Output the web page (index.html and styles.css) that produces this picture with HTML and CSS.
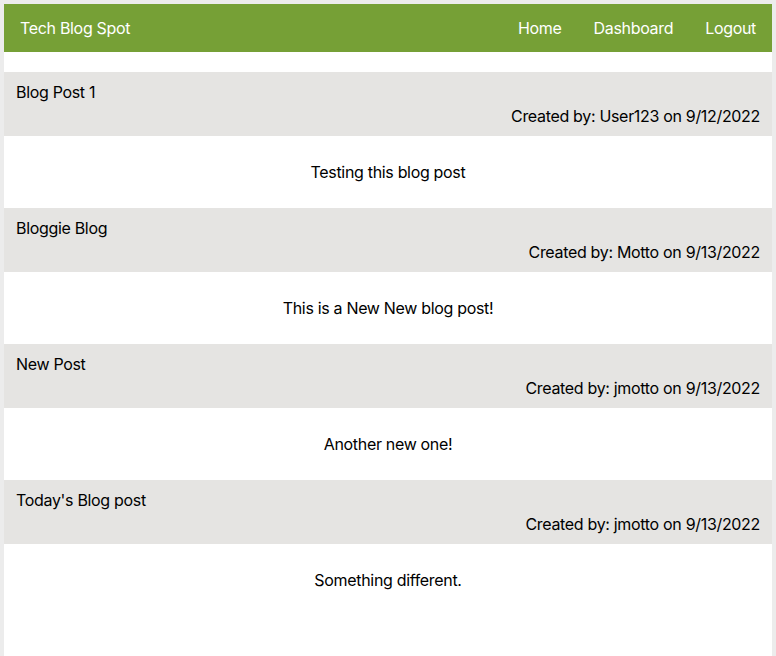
FILE: index.html
```html
<!DOCTYPE html>
<html lang="en">
<head>
<meta charset="utf-8">
<title>Tech Blog Spot</title>
<link rel="stylesheet" href="styles.css">
</head>
<body>
<div class="frame">
  <header class="topbar">
    <span class="brand">Tech Blog Spot</span>
    <nav class="nav">
      <a href="#">Home</a>
      <a href="#">Dashboard</a>
      <a href="#">Logout</a>
    </nav>
  </header>
  <main class="posts">
    <article class="post">
      <div class="post-head">
        <div class="post-title">Blog Post 1</div>
        <div class="post-meta">Created by: User123 on 9/12/2022</div>
      </div>
      <div class="post-body">Testing this blog post</div>
    </article>
    <article class="post">
      <div class="post-head">
        <div class="post-title">Bloggie Blog</div>
        <div class="post-meta">Created by: Motto on 9/13/2022</div>
      </div>
      <div class="post-body">This is a New New blog post!</div>
    </article>
    <article class="post">
      <div class="post-head">
        <div class="post-title">New Post</div>
        <div class="post-meta">Created by: jmotto on 9/13/2022</div>
      </div>
      <div class="post-body">Another new one!</div>
    </article>
    <article class="post">
      <div class="post-head">
        <div class="post-title">Today's Blog post</div>
        <div class="post-meta">Created by: jmotto on 9/13/2022</div>
      </div>
      <div class="post-body">Something different.</div>
    </article>
  </main>
</div>
</body>
</html>
```
FILE: styles.css
```css
html, body {
  margin: 0;
  padding: 0;
}
body {
  background: #ececec;
  font-family: Inter, "Liberation Sans", Arial, sans-serif;
  font-size: 16px;
  letter-spacing: -0.32px;
  color: #000;
}
.frame {
  margin: 4px 4px 0 4px;
  background: #fff;
  min-height: 652px;
}
.topbar {
  background: #76a036;
  height: 48px;
  display: flex;
  align-items: center;
  justify-content: space-between;
  padding: 0 16px;
  color: #fff;
}
.brand {
  font-size: 16px;
}
.nav {
  display: flex;
  gap: 32px;
}
.nav a {
  color: #fff;
  text-decoration: none;
}
.posts {
  padding-top: 20px;
}
.post-head {
  background: #e5e4e2;
  padding: 8px 12px;
  line-height: 24px;
}
.post-meta {
  text-align: right;
}
.post-body {
  padding: 24px 12px;
  line-height: 24px;
  text-align: center;
}
```
